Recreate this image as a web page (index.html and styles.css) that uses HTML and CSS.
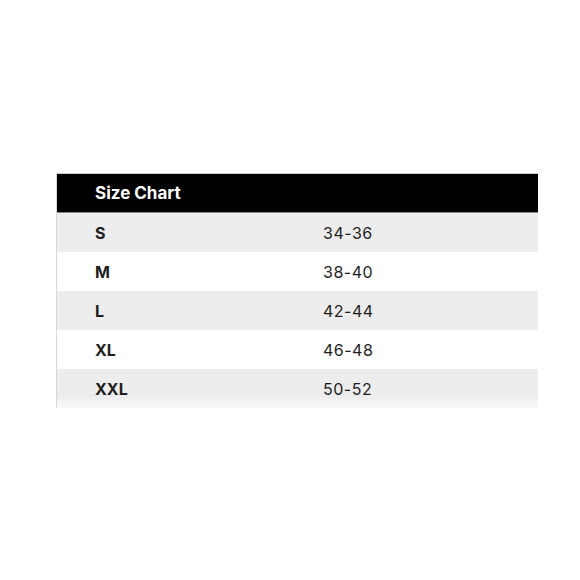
FILE: index.html
```html
<!DOCTYPE html>
<html>
<head>
<meta charset="utf-8">
<link rel="stylesheet" href="styles.css">
</head>
<body>
<div class="page">
  <div class="chart">
    <div class="row head"><div class="c1">Size Chart</div><div class="c2"></div></div>
    <div class="row alt"><div class="c1">S</div><div class="c2">34-36</div></div>
    <div class="row"><div class="c1">M</div><div class="c2">38-40</div></div>
    <div class="row alt"><div class="c1">L</div><div class="c2">42-44</div></div>
    <div class="row"><div class="c1">XL</div><div class="c2">46-48</div></div>
    <div class="row alt last"><div class="c1">XXL</div><div class="c2">50-52</div></div>
  </div>
</div>
</body>
</html>
```
FILE: styles.css
```css
html, body {
  margin: 0;
  padding: 0;
  background: #fff;
}
.page {
  width: 580px;
  height: 580px;
  padding-top: 173px;
  padding-left: 56px;
  box-sizing: border-box;
}
.chart {
  width: 481px;
  border-left: 1px solid #d8d8d8;
  border-top: 1px solid #d0d0d0;
  font-family: Inter, "Liberation Sans", sans-serif;
  color: #1e1e1e;
}
.row {
  display: flex;
  height: 39px;
  align-items: center;
  font-size: 16px;
  background: #fff;
}
.row.alt {
  background: #ededed;
}
.row.last {
  background: linear-gradient(#ededed 70%, #fafafa);
}
.head {
  background: #000;
  color: #fff;
  font-weight: 700;
  font-size: 17px;
  height: 38px;
  border-bottom: 1px solid #888;
}
.c1 {
  width: 228px;
  padding-left: 38px;
  font-weight: 700;
}
.c2 {
  letter-spacing: 0.5px;
}
```
